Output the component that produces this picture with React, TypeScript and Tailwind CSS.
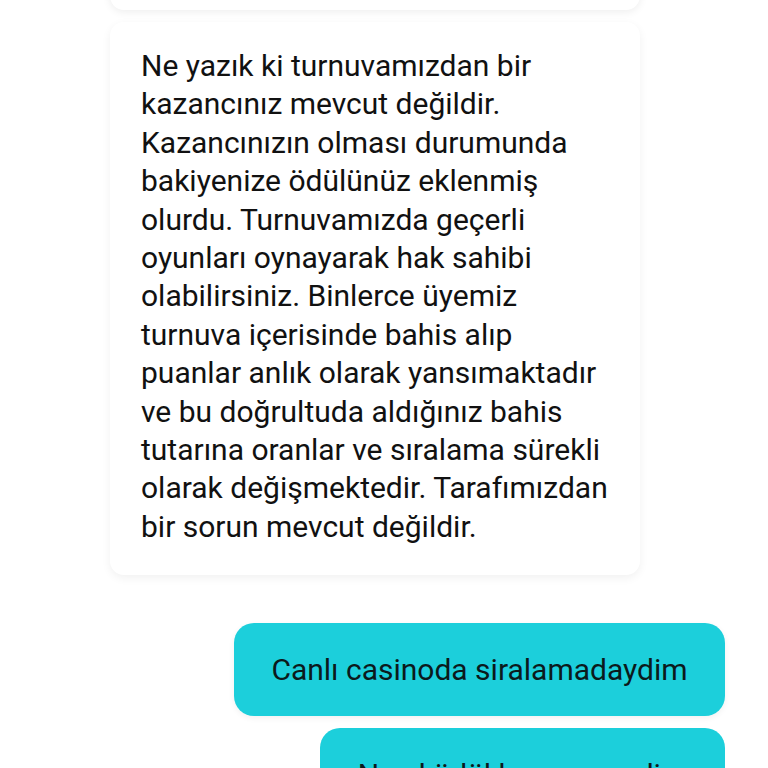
const lines = [
  "Ne yazık ki turnuvamızdan bir",
  "kazancınız mevcut değildir.",
  "Kazancınızın olması durumunda",
  "bakiyenize ödülünüz eklenmiş",
  "olurdu. Turnuvamızda geçerli",
  "oyunları oynayarak hak sahibi",
  "olabilirsiniz. Binlerce üyemiz",
  "turnuva içerisinde bahis alıp",
  "puanlar anlık olarak yansımaktadır",
  "ve bu doğrultuda aldığınız bahis",
  "tutarına oranlar ve sıralama sürekli",
  "olarak değişmektedir. Tarafımızdan",
  "bir sorun mevcut değildir.",
];

export default function App() {
  return (
    <div
      className="w-[768px] h-[768px] overflow-hidden bg-white text-[#111]"
      style={{ fontFamily: "Roboto, 'Liberation Sans', sans-serif" }}
    >
      <div className="flex flex-col">
        <div className="ml-[110px] w-[530px] mt-[-40px] h-[50px] bg-white rounded-b-[14px] shadow-[0_2px_8px_rgba(0,0,0,0.07)]" />
        <div className="ml-[110px] w-[530px] mt-[12px] bg-white rounded-[14px] shadow-[0_3px_10px_rgba(0,0,0,0.06)] pl-[31px] pt-[25px] pb-[29px]">
          {lines.map((l, i) => (
            <div key={i} className="text-[30px] leading-[38.4px] whitespace-nowrap">
              {l}
            </div>
          ))}
        </div>
        <div className="flex flex-col items-end pr-[43px] mt-[48px] gap-[12px]">
          <div className="w-[491px] h-[93px] rounded-[20px] bg-[#1ccfdb] flex items-center justify-center text-[30px] text-[#0b1a1c] shadow-[0_2px_6px_rgba(0,0,0,0.06)]">
            Canlı casinoda siralamadaydim
          </div>
          <div className="w-[405px] h-[93px] rounded-[20px] bg-[#1ccfdb] flex items-center justify-center text-[30px] text-[#0b1a1c]">
            Nasıl ödül kazanamadim
          </div>
        </div>
      </div>
    </div>
  );
}
